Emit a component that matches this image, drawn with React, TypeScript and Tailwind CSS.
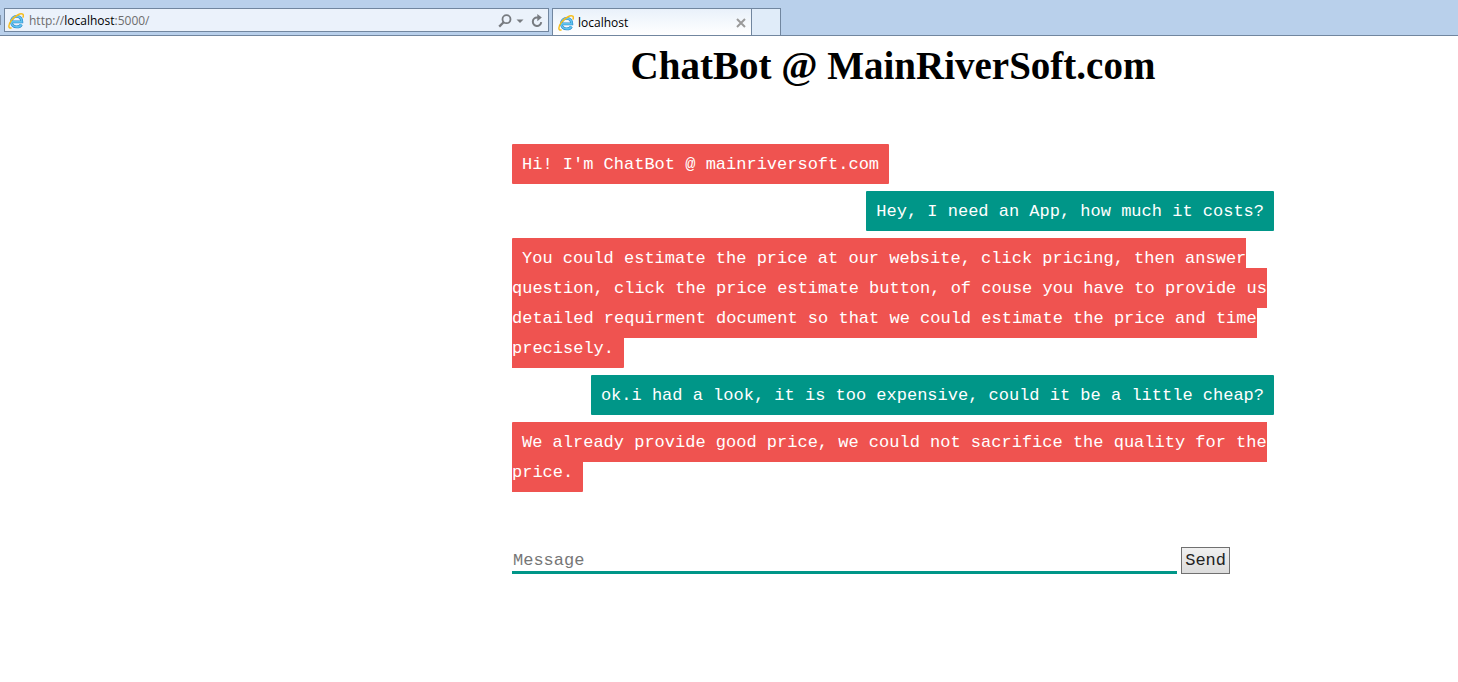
import React, { useState } from "react";

type Message = { from: "bot" | "user"; text: string };

const messages: Message[] = [
  { from: "bot", text: "Hi! I'm ChatBot @ mainriversoft.com" },
  { from: "user", text: "Hey, I need an App, how much it costs?" },
  {
    from: "bot",
    text: "You could estimate the price at our website, click pricing, then answer question, click the price estimate button, of couse you have to provide us detailed requirment document so that we could estimate the price and time precisely.",
  },
  { from: "user", text: "ok.i had a look, it is too expensive, could it be a little cheap?" },
  {
    from: "bot",
    text: "We already provide good price, we could not sacrifice the quality for the price.",
  },
];

function BrowserIcon() {
  const ring = "M4.2 8.900h9.600c.2-3.300-2-5.500-5-5.500-3.200 0-5.400 2.300-5.400 5.300s2.200 5.200 5.400 5.200c2.200 0 3.800-.9 4.600-2.400";
  return (
    <svg viewBox="0 0 16 16" className="size-4 shrink-0" fill="none" aria-hidden="true">
      <path d={ring} stroke="#2a86c8" strokeWidth="2.900" />
      <path d={ring} stroke="#5fc3ef" strokeWidth="1.700" />
      <path
        d="M3 15C.3 15.600 0 11.900 3.200 7.600 6.500 3.200 12.300-.2 14.700 1.200c.8.600.8 1.600.4 2.800"
        stroke="#f5bd1c"
        strokeWidth="1.500"
        strokeLinecap="round"
      />
    </svg>
  );
}

function BrowserBar() {
  return (
    <header className="flex h-9 items-end border-b border-[#71869f] bg-[#b9d0eb] font-['Open_Sans',sans-serif] text-[12px] text-black">
      <div className="mb-2.5 h-2.5 w-px bg-[#8295ab]" />
      <form
        className="mb-[3px] ml-[3px] flex h-6 w-[545px] items-center border border-[#71869f] bg-[#ebf2fb] pt-px pr-1 pl-[3px]"
        onSubmit={(e) => e.preventDefault()}
      >
        <BrowserIcon />
        <a href="http://localhost:5000/" className="ml-[5px] grow text-[#6d6d6d]">
          http://<span className="text-black">localhost</span>:5000/
        </a>
        <button type="button" aria-label="Search" className="mr-1">
          <svg viewBox="0 0 14 14" className="size-3.5" fill="none" stroke="#777b80">
            <circle cx="8.500" cy="5.200" r="4" strokeWidth="1.800" />
            <path d="M5.600 8.200 1.200 12.600" strokeWidth="2.300" />
          </svg>
        </button>
        <button type="button" aria-label="Show addresses" className="mr-1.5">
          <svg viewBox="0 0 8 8" className="size-2" fill="#777b80">
            <path d="M.5 2.500h7L4 6z" />
          </svg>
        </button>
        <button type="button" aria-label="Refresh">
          <svg viewBox="0 0 14 14" className="size-3.5" fill="none" stroke="#777b80">
            <path d="M8.500 3.500H7a4.200 4.200 0 1 0 4.200 4.700" strokeWidth="2" />
            <path d="M7.300 0 11.800 3.600 7.300 7.200z" fill="#777b80" stroke="none" />
          </svg>
        </button>
      </form>
      <div className="ml-[3px] flex h-[27px] w-[200px] items-center border border-b-0 border-[#71869f] bg-linear-to-b from-[#e9f1fa] to-white pt-px pr-1 pl-[5px]">
        <BrowserIcon />
        <span className="ml-1 grow">localhost</span>
        <button type="button" aria-label="Close tab">
          <svg viewBox="0 0 12 12" className="size-3" stroke="#9a9a9a" strokeWidth="2">
            <path d="m2 2 8 8M10 2l-8 8" />
          </svg>
        </button>
      </div>
      <button
        type="button"
        aria-label="New tab"
        className="h-[27px] w-[29px] border border-b-0 border-l-0 border-[#71869f] bg-[#e0ecf9]"
      />
    </header>
  );
}

export default function App() {
  const [draft, setDraft] = useState("");
  return (
    <div className="min-h-screen bg-white">
      <BrowserBar />
      <div className="grid grid-cols-[512fr_762fr_184fr] font-['Liberation_Mono',monospace] text-[17px] leading-[30px]">
        <main className="col-start-2">
          <h1 className="text-center font-['Liberation_Serif',serif] text-[39px] leading-[60px] font-bold text-black">
            ChatBot @ MainRiverSoft.com
          </h1>
          <div className="mt-[54px] flex flex-col gap-[17px]">
            {messages.map((m) => (
              <p key={m.text} className={m.from === "user" ? "text-right" : "text-left"}>
                <span
                  className={
                    m.from === "user"
                      ? "rounded-[1px] bg-[#009688] px-[10px] pt-[11px] pb-[10px] text-white"
                      : "rounded-[1px] bg-[#ef5350] px-[10px] pt-[11px] pb-[10px] text-white"
                  }
                >
                  {m.text}
                </span>
              </p>
            ))}
          </div>
          <form className="mt-[59px] flex gap-1 pr-11" onSubmit={(e) => e.preventDefault()}>
            <input
              type="text"
              aria-label="Message"
              placeholder="Message"
              value={draft}
              onChange={(e) => setDraft(e.target.value)}
              className="h-[27px] min-w-0 grow border-b-3 border-[#009688] px-px pt-0.5 leading-6 outline-none placeholder:text-[#767676]"
            />
            <button
              type="submit"
              className="h-[27px] border border-[#707070] bg-linear-to-b from-[#f0f0f0] to-[#dcdcdc] px-[3px] leading-6 text-[#222]"
            >
              Send
            </button>
          </form>
        </main>
      </div>
    </div>
  );
}
